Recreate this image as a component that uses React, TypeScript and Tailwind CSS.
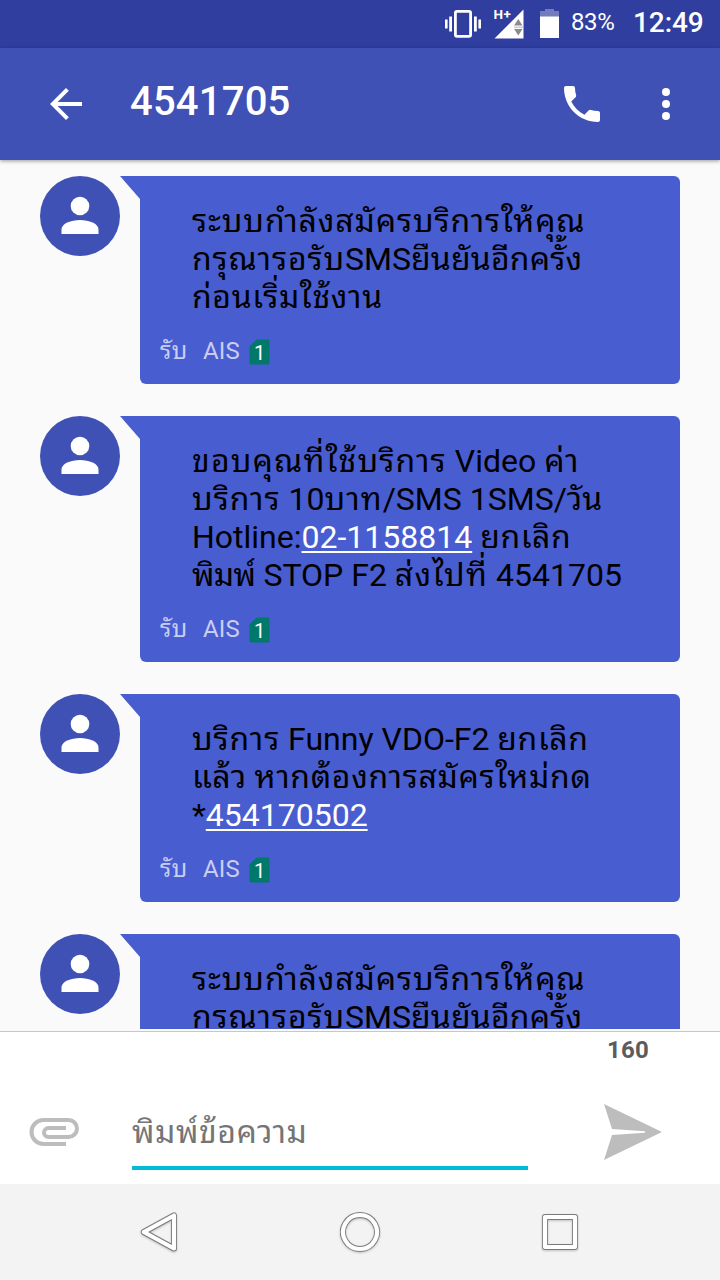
import type { ReactNode } from "react";

type Message = {
  id: number;
  lines: ReactNode[];
};

const PhoneLink = ({ children }: { children: ReactNode }) => (
  <span className="text-white underline decoration-2 underline-offset-3 [text-decoration-skip-ink:none]">
    {children}
  </span>
);

const registering: ReactNode[] = [
  <span className="tracking-[0.88px]">ระบบกำลังสมัครบริการให้คุณ</span>,
  <>
    <span className="tracking-[0.87px]">กรุณารอรับ</span>SMS
    <span className="tracking-[0.2px]">ยืนยันอีกครั้ง</span>
  </>,
  <span className="tracking-[0.64px]">ก่อนเริ่มใช้งาน</span>,
];

const messages: Message[] = [
  { id: 1, lines: registering },
  {
    id: 2,
    lines: [
      <>
        <span className="tracking-[1.15px]">ขอบคุณที่ใช้บริการ</span> Video <span className="tracking-[1px]">ค่า</span>
      </>,
      <>
        <span className="tracking-[1px]">บริการ</span> 10<span className="tracking-[1px]">บาท</span>/SMS 1SMS/วัน
      </>,
      <>
        Hotline:<PhoneLink>02-1158814</PhoneLink> <span className="tracking-[0.6px]">ยกเลิก</span>
      </>,
      <>
        <span className="tracking-[-0.6px]">พิมพ์</span> STOP F2 <span className="tracking-[1.2px]">ส่งไปที่</span> 4541705
      </>,
    ],
  },
  {
    id: 3,
    lines: [
      <>
        <span className="tracking-[0.9px]">บริการ</span> Funny VDO-F2 <span className="tracking-[0.6px]">ยกเลิก</span>
      </>,
      <>
        <span className="tracking-[0.4px]">แล้ว</span> <span className="tracking-[0.68px]">หากต้องการสมัครใหม่กด</span>
      </>,
      <>
        *<PhoneLink>454170502</PhoneLink>
      </>,
    ],
  },
  { id: 4, lines: registering },
];

const StatusBar = () => (
  <div className="flex h-12 shrink-0 items-center bg-[#303f9f] pl-[444px] text-white">
    <svg className="h-12 w-[38px] shrink-0" viewBox="0 0 38 48" fill="white">
      <rect x="11.4" y="11.4" width="15.2" height="25" rx="1.6" fill="none" stroke="white" strokeWidth="2.8" />
      <path d="M1 19.5h2.6v9H1zM5.2 16.5H8v15H5.2zM30 16.5h2.8v15H30zM34.4 19.5H37v9h-2.6z" />
    </svg>
    <svg className="ml-3 h-12 w-[32px] shrink-0" viewBox="0 0 32 48">
      <path d="M0.500 38.500 29.500 9.500V38.500z" fill="white" />
      <text x="-0.500" y="19.200" fontSize="13.500" fontWeight="700" letterSpacing="0.5" fontFamily="Roboto, sans-serif" fill="white">
        H+
      </text>
      <path d="M24.300 19l4.200 6.500h-8.400zM24.300 35.500l4.200-6.500h-8.400z" fill="#8b8b8b" />
      <path d="M20 27.200h9.500" stroke="#b5b5b5" strokeWidth="1" />
    </svg>
    <svg className="ml-[13px] h-12 w-5 shrink-0" viewBox="0 0 20 48">
      <path d="M6 9h9v2h5v6H1v-6h5z" fill="#737dbd" />
      <path d="M1 16.500h19V38H1z" fill="white" />
    </svg>
    <span className="ml-[12px] w-[46px] -translate-y-[2px] text-[24px] leading-[28px] tracking-[-0.4px]">83%</span>
    <span className="ml-[16px] -translate-y-px text-[28px] font-medium leading-[32px] tracking-[-0.1px]">12:49</span>
  </div>
);

const Toolbar = () => (
  <header className="z-10 flex h-28 shrink-0 items-center bg-[#3f51b5] pl-[42px] text-white shadow-[0_1px_4px_rgba(0,0,0,0.4)]">
    <svg className="size-12" viewBox="0 0 24 24" fill="white">
      <path d="M20 11H7.830l5.590-5.590L12 4l-8 8 8 8 1.410-1.410L7.830 13H20v-2z" />
    </svg>
    <h1 className="ml-10 w-[428px] -translate-y-[2px] text-[40px] font-medium leading-[48px] tracking-[0.2px]">4541705</h1>
    <svg className="size-12" viewBox="0 0 24 24" fill="white">
      <path d="M6.620 10.790c1.440 2.830 3.760 5.140 6.590 6.590l2.200-2.200c.270-.270.670-.360 1.020-.240 1.120.370 2.330.570 3.570.570.550 0 1 .450 1 1V20c0 .550-.450 1-1 1-9.390 0-17-7.610-17-17 0-.550.450-1 1-1h3.500c.550 0 1 .450 1 1 0 1.250.200 2.450.570 3.570.110.350.030.740-.250 1.020l-2.200 2.200z" />
    </svg>
    <svg className="ml-9 size-12" viewBox="0 0 24 24" fill="white">
      <circle cx="12" cy="6" r="2" />
      <circle cx="12" cy="12" r="2" />
      <circle cx="12" cy="18" r="2" />
    </svg>
  </header>
);

const Avatar = () => (
  <div className="flex size-20 shrink-0 items-center justify-center rounded-full bg-[#3f51b5]">
    <svg className="size-20" viewBox="0 0 80 80" fill="white">
      <circle cx="40" cy="30" r="9.300" />
      <path d="M21.500 58v-4.500C21.500 47.500 31 44 40 44s18.500 3.500 18.500 9.500V58z" />
    </svg>
  </div>
);

const SimBadge = () => (
  <svg className="ml-[9px] h-[26px] w-[21px] translate-y-px" viewBox="0 0 21 26">
    <path d="M7.500 0.500H19a1.500 1.500 0 0 1 1.500 1.500V24a1.500 1.500 0 0 1-1.500 1.500H2A1.500 1.500 0 0 1 .500 24V7.500z" fill="#00796b" />
    <text x="10.500" y="20.500" textAnchor="middle" fontSize="20" fontFamily="Roboto, sans-serif" fill="white">
      1
    </text>
  </svg>
);

const MessageRow = ({ lines }: { lines: ReactNode[] }) => (
  <div className="flex shrink-0 items-start">
    <Avatar />
    <div className="h-[23px] w-5 shrink-0 bg-[#485dd0] [clip-path:polygon(0_0,100%_0,100%_100%)]" />
    <div className="flex w-[540px] flex-col rounded-md rounded-tl-none bg-[#485dd0] pt-[26px] pb-[18px]">
      <div className="pl-[52px] text-[32px] text-black">
        {lines.map((line, i) => (
          <p key={i} className="h-[38px] whitespace-nowrap leading-[38px]">
            {line}
          </p>
        ))}
      </div>
      <div className="mt-[20px] flex h-[30px] items-center pl-5 text-[24px] leading-[30px] text-[#c8cef1]">
        <span className="w-[43px] tracking-[0.5px]">รับ</span>
        <span className="tracking-[0.2px]">AIS</span>
        <SimBadge />
      </div>
    </div>
  </div>
);

const Composer = () => (
  <div className="flex h-[153px] shrink-0 items-start border-t border-[#c8c8c8] bg-white">
    <svg className="mt-[70px] ml-[26px] h-14 w-14" viewBox="0 0 56 56" fill="none" stroke="#bdbdbd" strokeWidth="4">
      <path d="M40 42H17.500a12 12 0 0 1 0-24H42.500a8.500 8.500 0 0 1 0 17H22.500a4.500 4.500 0 0 1 0-9H40" />
    </svg>
    <div className="mt-[77px] ml-[50px] flex h-[61px] w-[396px] flex-col border-b-4 border-[#00bcd4]">
      <span className="text-[32px] leading-[46px] tracking-[0.55px] text-[#757575]">พิมพ์ข้อความ</span>
    </div>
    <div className="ml-[74px] flex flex-col">
      <span className="mt-1 ml-[5px] text-[24px] font-bold leading-[28px] tracking-[0.2px] text-[#5c5c5c]">160</span>
      <svg className="mt-[40px] h-[57px] w-[60px]" viewBox="0 0 60 57" fill="#bdbdbd">
        <path d="M2 0 60 28 2 56 10 31 43 28.800V27.200L10 25z" />
      </svg>
    </div>
  </div>
);

const NavBar = () => (
  <nav className="flex h-24 shrink-0 items-center justify-between bg-[#f3f3f3] px-[136px]">
    {["M38 11.500V44.500L7.800 28z", "M24 11a17 17 0 1 0 .01 0z", "M9 13h30v30H9z"].map((d) => (
      <svg
        key={d}
        className="h-14 w-12 drop-shadow-[0_1px_1px_rgba(0,0,0,0.2)]"
        viewBox="0 0 48 56"
        fill="none"
        strokeLinejoin="round"
      >
        <path d={d} stroke="#7a7a7a" strokeWidth="6" />
        <path d={d} stroke="white" strokeWidth="4.2" />
      </svg>
    ))}
  </nav>
);

export default function App() {
  return (
    <div className="flex h-[1280px] w-[720px] flex-col overflow-hidden bg-[#fafafa] font-[Roboto,'Noto_Sans_Thai_Looped','Noto_Sans',sans-serif]">
      <StatusBar />
      <Toolbar />
      <main className="flex h-[869px] shrink-0 flex-col gap-8 overflow-hidden pt-4 pl-10">
        {messages.map((message) => (
          <MessageRow key={message.id} lines={message.lines} />
        ))}
      </main>
      <div className="h-0.5 shrink-0" />
      <Composer />
      <NavBar />
    </div>
  );
}
